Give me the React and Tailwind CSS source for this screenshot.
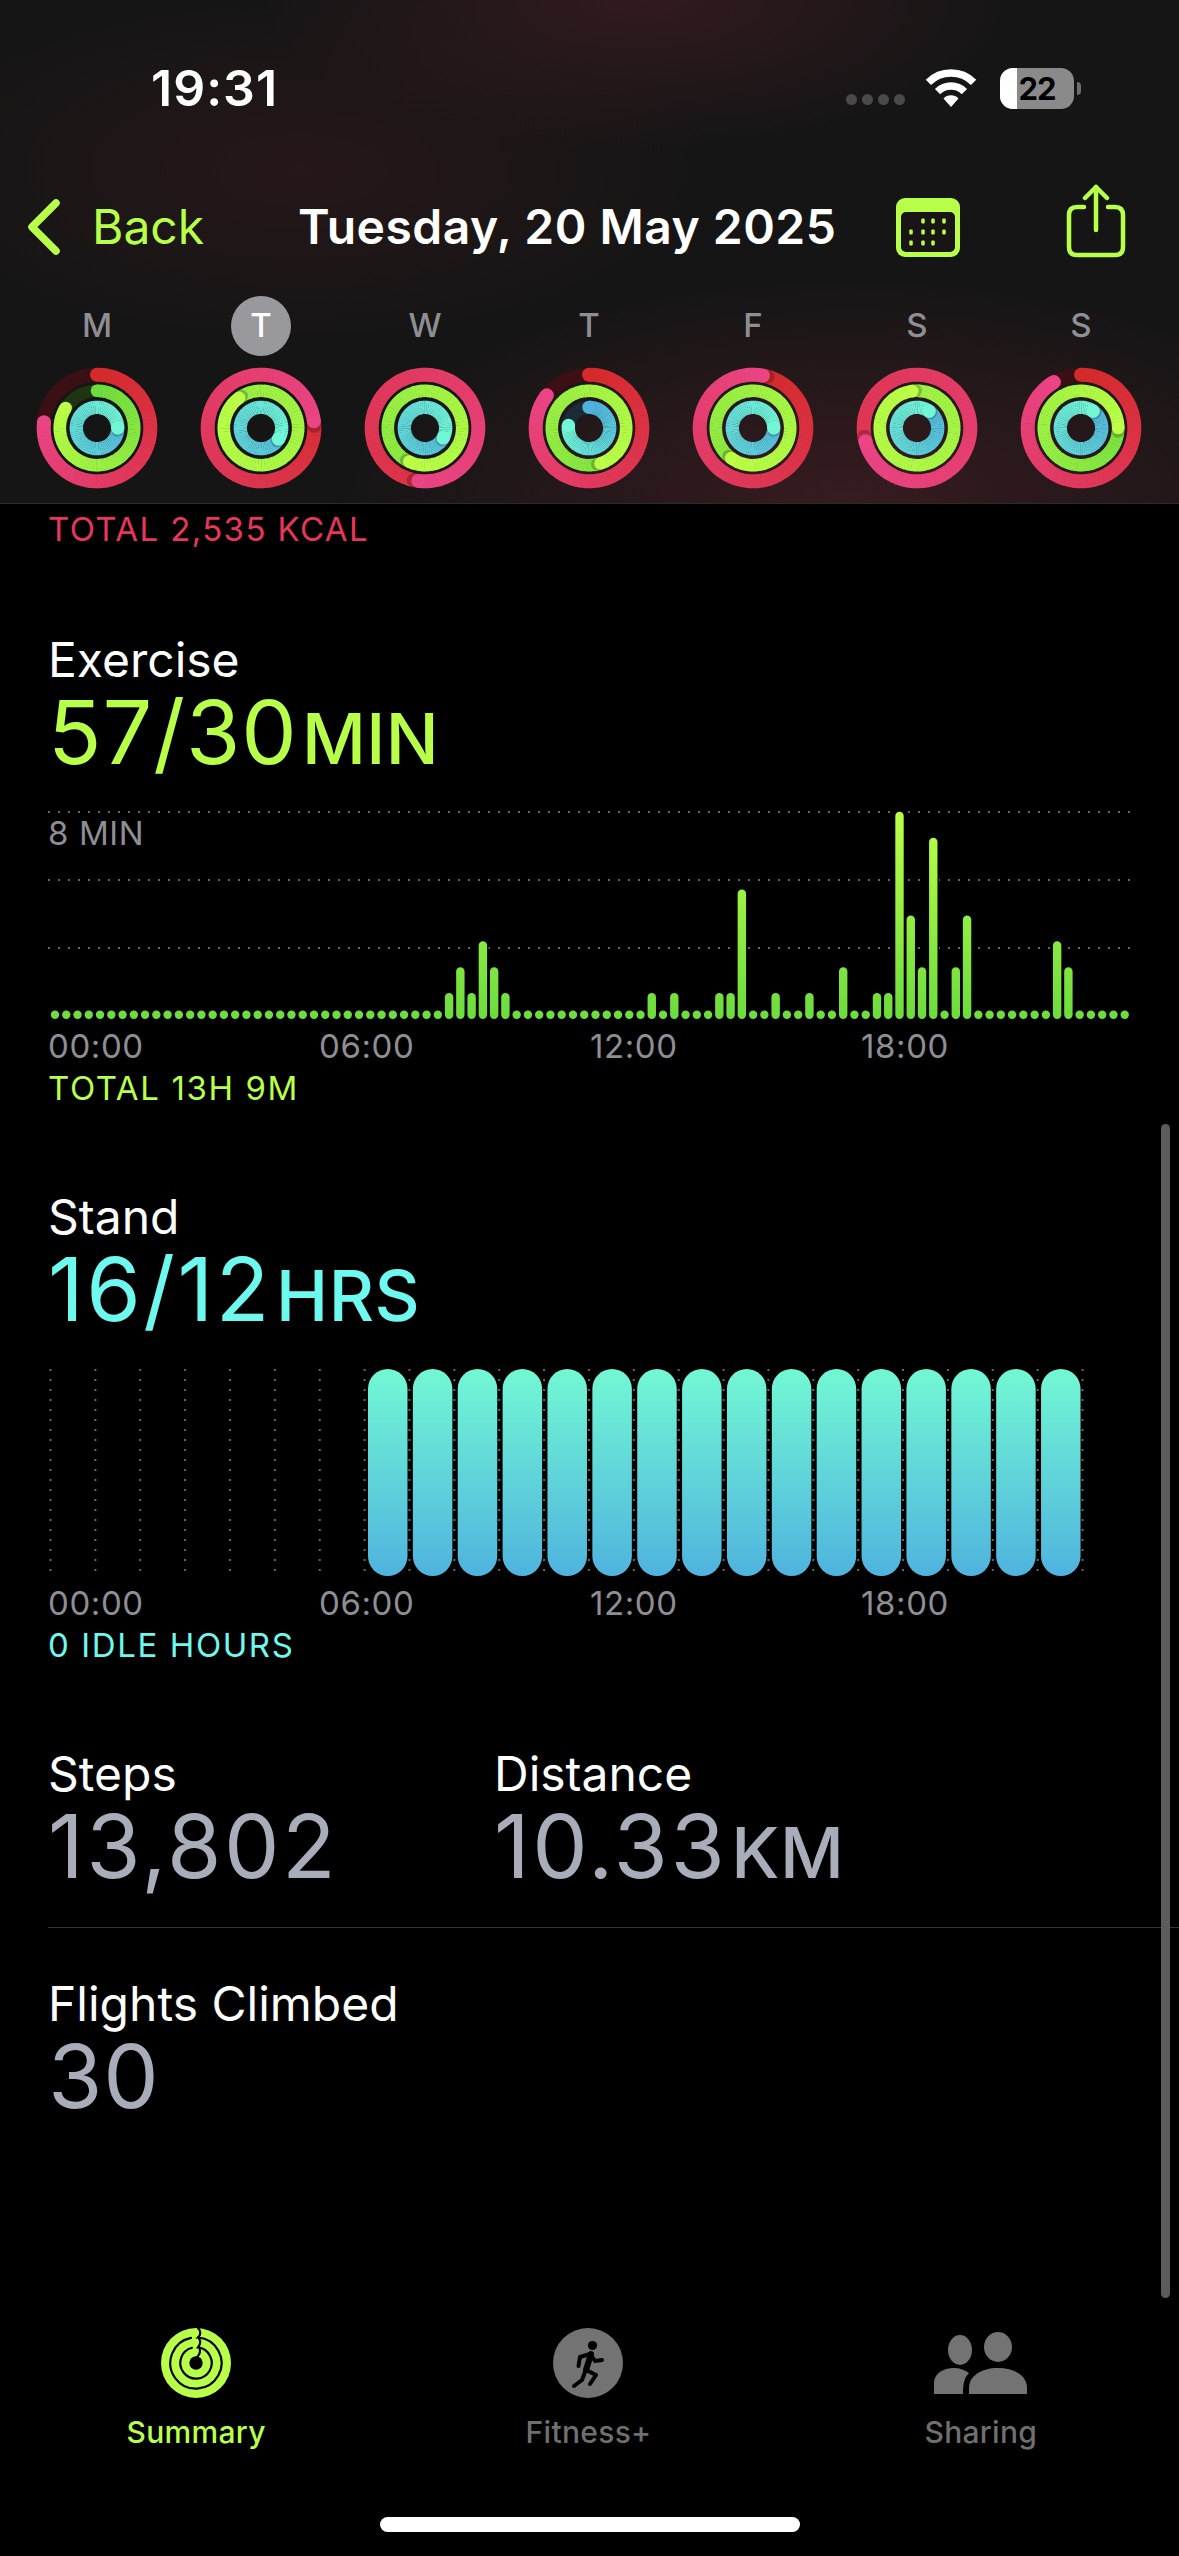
import React from 'react'

const LIME = '#b8ff4a'

// ring colours: [lap start, head]
const RED = [[212, 42, 42], [234, 68, 133]]
const GREEN = [[110, 220, 62], [188, 255, 70]]
const BLUE = [[78, 178, 220], [114, 247, 214]]

const days = [
  { label: 'M', red: 0.767, green: 0.84, blue: 1.25 },
  { label: 'T', red: 1.23, green: 1.9, blue: 1.34, selected: true },
  { label: 'W', red: 1.52, green: 1.57, blue: 1.33 },
  { label: 'T', red: 0.855, green: 1.45, blue: 0.77 },
  { label: 'F', red: 1.03, green: 1.6, blue: 1.25 },
  { label: 'S', red: 1.71, green: 1.98, blue: 1.1 },
  { label: 'S', red: 0.915, green: 1.25, blue: 1.1 },
]

// levels for the 96 quarter hours of the exercise chart, anything else is a dot
const exerciseLevels = {
  35: 1, 36: 2, 37: 1, 38: 3, 39: 2, 40: 1,
  53: 1, 55: 1, 59: 1, 60: 1, 61: 5, 64: 1, 67: 1, 70: 2,
  73: 1, 74: 1, 75: 8, 76: 4, 77: 2, 78: 7, 80: 2, 81: 4,
  89: 3, 90: 2,
}

const mix = (a, b, t) => {
  const c = a.map((v, i) => Math.round(v + (b[i] - v) * t))
  return `rgb(${c[0]},${c[1]},${c[2]})`
}

const polar = (r, deg) => {
  const a = ((deg - 90) * Math.PI) / 180
  return [61 + r * Math.cos(a), 61 + r * Math.sin(a)]
}

function Ring({ r, f, colors, track, width }) {
  const head = f * 360
  const from = f >= 1 ? head - 360 : 0
  const sweep = head - from
  const startMix = f >= 1 ? Math.min(0.8, (f - 1) * 0.6) : 0
  const steps = 72
  const segs = []
  for (let i = 0; i < steps; i++) {
    const a = from + (sweep * i) / steps
    const b = from + (sweep * (i + 1)) / steps + 0.6
    const [x1, y1] = polar(r, a)
    const [x2, y2] = polar(r, Math.min(b, head))
    const t = startMix + (1 - startMix) * ((i + 0.5) / steps)
    segs.push(
      <path
        key={i}
        d={`M${x1} ${y1}A${r} ${r} 0 0 1 ${x2} ${y2}`}
        fill="none"
        stroke={mix(colors[0], colors[1], t)}
        strokeWidth={width}
      />
    )
  }
  const [hx, hy] = polar(r, head)
  const [sx, sy] = polar(r, head + 5)
  const [ox, oy] = polar(r, 0)
  return (
    <g>
      {f < 1 && <circle cx="61" cy="61" r={r} fill="none" stroke={track} strokeWidth={width} />}
      {segs}
      {f < 1 && <circle cx={ox} cy={oy} r={width / 2} fill={mix(colors[0], colors[1], 0)} />}
      {f >= 1 && <circle cx={sx} cy={sy} r={width / 2} fill="#000" opacity="0.22" />}
      <circle cx={hx} cy={hy} r={width / 2} fill={mix(colors[0], colors[1], 1)} />
    </g>
  )
}

function ActivityRings({ day }) {
  return (
    <svg width="122" height="122" viewBox="0 0 122 122" className="block">
      <Ring r={53.3} f={day.red} colors={RED} track="#3a1014" width={14} />
      <Ring r={37.2} f={day.green} colors={GREEN} track="#1f3512" width={12.6} />
      <Ring r={20.7} f={day.blue} colors={BLUE} track="#1b2c36" width={13.3} />
    </svg>
  )
}

function DayColumn({ day }) {
  return (
    <div className="flex w-[164px] flex-col items-center">
      <div
        className={`flex h-[60px] w-[60px] items-center justify-center rounded-full text-[33px] font-medium ${
          day.selected ? 'bg-[#98989d] text-white' : 'text-[#8e8e93]'
        }`}
      >
        {day.label}
      </div>
      <div className="mt-[11px]">
        <ActivityRings day={day} />
      </div>
    </div>
  )
}

function WifiIcon() {
  return (
    <svg width="52" height="38" viewBox="0 0 52 38" className="block">
      <path d="M3.4 13.4A32 32 0 0 1 48.6 13.4" fill="none" stroke="#fff" strokeWidth="7.5" />
      <path d="M12.6 22.6A19 19 0 0 1 39.4 22.6" fill="none" stroke="#fff" strokeWidth="7.5" />
      <path d="M26 38L18.5 29.5A10.5 10.5 0 0 1 33.5 29.5Z" fill="#fff" />
    </svg>
  )
}

function Battery() {
  return (
    <div className="flex items-center">
      <div className="relative flex h-[41px] w-[74px] items-center justify-center overflow-hidden rounded-[13px] bg-[#8a8a8a]">
        <div className="absolute inset-y-0 left-0 w-[17px] bg-white" />
        <span className="relative text-[31px] font-bold leading-none tracking-[-1px] text-black">22</span>
      </div>
      <div className="ml-[3px] h-[13px] w-[4px] rounded-r-full bg-[#6e6e6e]" />
    </div>
  )
}

function StatusBar() {
  return (
    <div className="flex h-[176px] items-center justify-between pl-[151px] pr-[98px]">
      <span className="text-[50px] font-semibold leading-none tracking-[1px] text-white">19:31</span>
      <div className="flex items-center">
        <div className="mt-[23px] flex gap-[5px]">
          <div className="h-[11px] w-[11px] rounded-full bg-[#4a4a4a]" />
          <div className="h-[11px] w-[11px] rounded-full bg-[#4a4a4a]" />
          <div className="h-[11px] w-[11px] rounded-full bg-[#4a4a4a]" />
          <div className="h-[11px] w-[11px] rounded-full bg-[#4a4a4a]" />
        </div>
        <div className="ml-[20px] mr-[23px]">
          <WifiIcon />
        </div>
        <Battery />
      </div>
    </div>
  )
}

function CalendarIcon() {
  const dots = [
    [27, 23], [37, 23], [48, 23],
    [15, 34], [27, 34], [37, 34], [48, 34],
    [15, 45], [27, 45], [37, 45],
  ]
  return (
    <svg width="64" height="59" viewBox="0 0 64 59" className="block">
      <rect width="64" height="59" rx="9" fill={LIME} />
      <rect x="5" y="14" width="54" height="40" rx="5" fill="#191416" />
      {dots.map(([x, y]) => (
        <rect key={`${x}-${y}`} x={x - 1.75} y={y - 2.5} width="3.5" height="5" rx="1" fill={LIME} />
      ))}
    </svg>
  )
}

function ShareIcon() {
  return (
    <svg width="60" height="74" viewBox="0 0 60 74" fill="none" stroke={LIME} strokeWidth="4.5" strokeLinecap="round" strokeLinejoin="round" className="block">
      <path d="M18 23H11Q3 23 3 31V63Q3 71 11 71H49Q57 71 57 63V31Q57 23 49 23H42" />
      <path d="M30 46V3" />
      <path d="M19 14L30 3L41 14" />
    </svg>
  )
}

function NavBar() {
  return (
    <div className="flex h-[102px] items-center pl-[28px]">
      <svg width="32" height="56" viewBox="0 0 32 56" fill="none" className="block shrink-0">
        <path d="M28 4L4 28L28 52" stroke={LIME} strokeWidth="7.5" strokeLinecap="round" strokeLinejoin="round" />
      </svg>
      <span className="ml-[32px] w-[206px] text-[48px] leading-none text-[#b8ff4a]">Back</span>
      <span className="w-[598px] whitespace-nowrap text-[48px] font-semibold leading-none tracking-[0.5px] text-white">
        Tuesday, 20 May 2025
      </span>
      <CalendarIcon />
      <div className="ml-[106px] -mt-[12px]">
        <ShareIcon />
      </div>
    </div>
  )
}

function ExerciseChart() {
  const gridLines = [8, 76, 144]
  const bars = []
  for (let i = 0; i < 96; i++) {
    const level = exerciseLevels[i]
    const x = 7 + i * 11.26 - 4.2
    const h = level ? level * 25.9 : 8.4
    const y = 215 - h
    bars.push(
      <g key={i}>
        {level && <rect x={x - 1.5} y={y - 1} width="11.4" height={h + 1} fill="#000" />}
        <rect x={x} y={y} width="8.4" height={h} rx="4.2" fill="url(#exercise-bar)" />
      </g>
    )
  }
  return (
    <svg width="1090" height="222" viewBox="0 0 1090 222" className="block">
      <defs>
        <linearGradient id="exercise-bar" gradientUnits="userSpaceOnUse" x1="0" y1="8" x2="0" y2="215">
          <stop offset="0" stopColor="#bcff48" />
          <stop offset="1" stopColor="#6cdc3e" />
        </linearGradient>
      </defs>
      {gridLines.map((y) => (
        <line key={y} x1="0" x2="1083" y1={y} y2={y} stroke="#666" strokeWidth="2" strokeDasharray="2 8" />
      ))}
      {bars}
    </svg>
  )
}

function StandChart() {
  const lines = []
  for (let i = 0; i < 24; i++) lines.push(2.5 + i * 44.87)
  const bars = []
  for (let i = 0; i < 16; i++) bars.push(320 + i * 44.87)
  return (
    <svg width="1090" height="222" viewBox="0 0 1090 222" className="block">
      <defs>
        <linearGradient id="stand-bar" x1="0" y1="0" x2="0" y2="1">
          <stop offset="0" stopColor="#72f8d4" />
          <stop offset="1" stopColor="#4fb3de" />
        </linearGradient>
      </defs>
      {lines.map((x) => (
        <line key={x} x1={x} x2={x} y1="8" y2="210" stroke="#666" strokeWidth="2" strokeDasharray="2 8" />
      ))}
      {bars.map((x) => (
        <rect key={x} x={x} y="8" width="39.5" height="207" rx="19.75" fill="url(#stand-bar)" />
      ))}
    </svg>
  )
}

function TimeAxis() {
  return (
    <div className="grid h-[41px] w-[1084px] grid-cols-4 text-[33px] leading-[41px] tracking-[0.6px] text-[#8e8e93]">
      <span>00:00</span>
      <span>06:00</span>
      <span>12:00</span>
      <span>18:00</span>
    </div>
  )
}

function Metric({ title, value, unit, color, wide, className = '' }) {
  return (
    <div className={className}>
      <div className="h-[60px] text-[48px] leading-[60px] text-white">{title}</div>
      <div className="flex h-[84px] items-baseline whitespace-nowrap" style={{ color }}>
        <span className={`text-[88px] leading-[84px] ${wide ? 'tracking-[2.5px]' : 'tracking-[1px]'}`}>{value}</span>
        {unit && <span className="ml-[4px] text-[70px] font-medium leading-none tracking-[0.5px]">{unit}</span>}
      </div>
    </div>
  )
}

function SummaryIcon() {
  return (
    <svg width="70" height="70" viewBox="0 0 70 70" fill="none" className="block">
      <circle cx="35" cy="35" r="35" fill={LIME} />
      <g stroke="#000" strokeWidth="2.2" strokeLinecap="round">
        <path d="M37 0C40 3 40 7 37 9.5A25.6 25.6 0 1 1 30 9.9" />
        <path d="M37 9.5C40 12 40 16 37 19.4A15.7 15.7 0 1 1 31 19.8" />
      </g>
      <path d="M38 19.4C40 22 39 26 36.5 28.5" stroke="#000" strokeWidth="2.2" strokeLinecap="round" />
      <circle cx="35" cy="35" r="6.7" fill="#000" />
    </svg>
  )
}

function FitnessIcon() {
  return (
    <svg width="70" height="70" viewBox="0 0 70 70" fill="none" className="block">
      <circle cx="35" cy="35" r="35" fill="#737373" />
      <circle cx="39.5" cy="17.5" r="4.6" fill="#000" />
      <g stroke="#000" strokeWidth="4" strokeLinecap="round" strokeLinejoin="round">
        <path d="M38 26L33 42" strokeWidth="6" />
        <path d="M37 26L27 29L25.5 38" />
        <path d="M38 27L42 33L49 32" />
        <path d="M33 42L43 47L37 56" />
        <path d="M32 44L29 52L21 58" />
      </g>
    </svg>
  )
}

function SharingIcon() {
  return (
    <svg width="94" height="62" viewBox="0 0 94 62" className="block">
      <ellipse cx="26" cy="18" rx="12" ry="15" fill="#737373" />
      <ellipse cx="64" cy="15" rx="14" ry="15" fill="#737373" />
      <path d="M0 62V52C0 40 11 36 20 36C26 36 31 38 35 41C30 46 29 52 29 62Z" fill="#737373" />
      <path d="M35 62V56C35 44 47 36 64 36C81 36 93 44 93 56V62Z" fill="#737373" />
    </svg>
  )
}

function TabItem({ icon, label, active }) {
  return (
    <div className="flex flex-col items-center">
      <div className="flex h-[70px] items-center justify-center">{icon}</div>
      <span
        className={`mt-[14px] text-[30px] font-medium leading-[40px] tracking-[0.3px] ${
          active ? 'text-[#b8ff4a]' : 'text-[#6f6f6f]'
        }`}
      >
        {label}
      </span>
    </div>
  )
}

export default function App() {
  return (
    <div className="relative flex h-[2556px] w-[1179px] flex-col overflow-hidden bg-black font-[Inter,sans-serif]">
      <header className="h-[504px] shrink-0 border-b border-[#2c2a2a] bg-[#151515] bg-[radial-gradient(ellipse_380px_150px_at_640px_0px,#321a1f,transparent),radial-gradient(ellipse_520px_230px_at_850px_503px,#371b20,transparent),radial-gradient(ellipse_420px_180px_at_300px_170px,#261719,transparent)]">
        <StatusBar />
        <NavBar />
        <div className="mt-[18px] flex pl-[15px]">
          {days.map((day, i) => (
            <DayColumn key={i} day={day} />
          ))}
        </div>
      </header>

      <main className="flex flex-1 flex-col pl-[48px]">
        <div className="h-[50px] text-[33px] leading-[50px] tracking-[1.4px] text-[#e8365c]">TOTAL 2,535 KCAL</div>

        <Metric className="mt-[76px]" title="Exercise" value="57/30" unit="MIN" color="#b8ff4a" />
        <div className="relative mt-[30px]">
          <ExerciseChart />
          <span className="absolute left-0 top-[9px] text-[33px] leading-[40px] tracking-[0.6px] text-[#8e8e93]">8 MIN</span>
        </div>
        <TimeAxis />
        <div className="mt-[1px] h-[40px] text-[33px] leading-[40px] tracking-[1.6px] text-[#b8ff4a]">TOTAL 13H 9M</div>

        <Metric className="mt-[79px]" title="Stand" value="16/12" unit="HRS" color="#6ef9ef" wide />
        <div className="mt-[30px]">
          <StandChart />
        </div>
        <TimeAxis />
        <div className="mt-[1px] h-[40px] text-[33px] leading-[40px] tracking-[1.6px] text-[#6ef9ef]">0 IDLE HOURS</div>

        <div className="mt-[79px] flex">
          <Metric className="w-[446px]" title="Steps" value="13,802" color="#a9adba" wide />
          <Metric title="Distance" value="10.33" unit="KM" color="#a9adba" wide />
        </div>
        <div className="mt-[39px] h-px bg-[#343436]" />
        <Metric className="mt-[46px]" title="Flights Climbed" value="30" color="#a9adba" />

        <nav className="-ml-[48px] mt-auto grid grid-cols-3 pr-[2px]">
          <TabItem icon={<SummaryIcon />} label="Summary" active />
          <TabItem icon={<FitnessIcon />} label="Fitness+" />
          <TabItem icon={<SharingIcon />} label="Sharing" />
        </nav>
        <div className="-ml-[48px] mb-[24px] mt-[65px] flex justify-center">
          <div className="h-[15px] w-[420px] rounded-full bg-white" />
        </div>
      </main>

      {/* Scroll indicator */}
      <div className="absolute left-[1161px] top-[1124px] h-[1174px] w-[9px] rounded-full bg-[#5c5c5c]" />
    </div>
  )
}
